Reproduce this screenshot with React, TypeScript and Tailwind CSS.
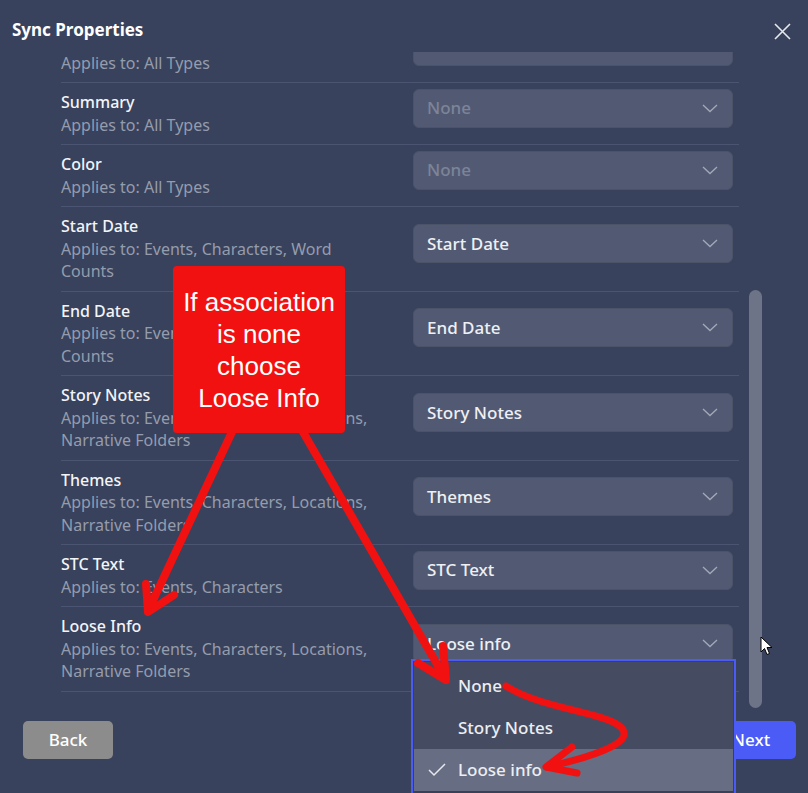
import React from "react";

type Row = { name: string; applies: string; value: string; disabled?: boolean };

const rows: Row[] = [
  { name: "Description", applies: "Applies to: All Types", value: "", disabled: true },
  { name: "Summary", applies: "Applies to: All Types", value: "None", disabled: true },
  { name: "Color", applies: "Applies to: All Types", value: "None", disabled: true },
  { name: "Start Date", applies: "Applies to: Events, Characters, Word Counts", value: "Start Date" },
  { name: "End Date", applies: "Applies to: Events, Characters, Word Counts", value: "End Date" },
  { name: "Story Notes", applies: "Applies to: Events, Characters, Locations, Narrative Folders", value: "Story Notes" },
  { name: "Themes", applies: "Applies to: Events, Characters, Locations, Narrative Folders", value: "Themes" },
  { name: "STC Text", applies: "Applies to: Events, Characters", value: "STC Text" },
  { name: "Loose Info", applies: "Applies to: Events, Characters, Locations, Narrative Folders", value: "Loose info" },
];

function Chevron() {
  return (
    <svg width="16" height="9" viewBox="0 0 16 9" className="shrink-0">
      <path d="M1 1 L8 7.5 L15 1" fill="none" stroke="#a3a9b8" strokeWidth="1.3" />
    </svg>
  );
}

function Select({ value, disabled }: { value: string; disabled?: boolean }) {
  return (
    <div className="-mt-[11px] w-[320px] h-[39px] shrink-0 rounded-[6px] bg-[#525a73] border border-[#4b5369] flex items-center justify-between pl-[13px] pr-[14px]">
      <span className={disabled ? "text-[17px] font-medium text-[#7d8498]" : "text-[17px] font-medium text-[#eef0f4]"}>{value}</span>
      <Chevron />
    </div>
  );
}

export default function App() {
  return (
    <div className="relative w-[808px] h-[793px] overflow-hidden bg-[#38425c] flex flex-col font-['Noto_Sans',sans-serif]">
      {/* header */}
      <div className="h-[52px] shrink-0 flex items-start justify-between pl-[12px] pr-[17px] pt-[17px]">
        <h1 className="text-[17px] leading-[26px] font-bold text-white">Sync Properties</h1>
        <svg width="17" height="17" viewBox="0 0 17 17" className="mt-[6px]">
          <path d="M1 1 L16 16 M16 1 L1 16" stroke="#e6e8ee" strokeWidth="1.6" />
        </svg>
      </div>

      {/* body */}
      <div className="h-[658px] shrink-0 flex pl-[61px]">
        <div className="w-[678px] overflow-hidden">
          <div className="-mt-[31px] flex flex-col">
            {rows.map((r) => (
              <div key={r.name} className="flex items-center border-b border-[#4b5470] pt-2 pb-2 pr-[6px]">
                <div className="w-[352px] shrink-0 pr-[32px] text-[16px] leading-[22.5px]">
                  <div className="font-medium text-[#f3f4f7]">{r.name}</div>
                  <div className="text-[#959cad]">{r.applies}</div>
                </div>
                <Select value={r.value} disabled={r.disabled} />
              </div>
            ))}
          </div>
        </div>
        <div className="ml-[10px] w-[13px] flex flex-col justify-end pb-[2px]">
          <div className="h-[418px] w-[13px] rounded-full bg-[#6e7488]" />
        </div>
      </div>

      {/* footer */}
      <div className="flex justify-between pl-[23px] pr-[12px] pt-[11px]">
        <button className="w-[90px] h-[38px] rounded-[5px] bg-[#8c8c8c] text-white text-[17px] font-medium">Back</button>
        <button className="w-[90px] h-[38px] rounded-[5px] bg-[#4a5cf5] text-white text-[17px] font-medium">Next</button>
      </div>

      {/* open dropdown */}
      <div className="absolute left-[411px] top-[659px] w-[325px] h-[140px] border-2 border-[#4a5cf5] bg-[#3a4156]">
        <div className="m-[1px] pt-[3px] bg-[#454c62] flex flex-col">
          <div className="h-[42px] flex items-center pl-[44px] text-[17px] font-medium text-[#eceef2]">None</div>
          <div className="h-[42px] flex items-center pl-[44px] text-[17px] font-medium text-[#eceef2]">Story Notes</div>
          <div className="h-[42px] flex items-center bg-[#676d82] pl-[14px] text-[17px] font-medium text-[#eceef2]">
            <svg width="18" height="14" viewBox="0 0 18 14" className="mr-[12px]">
              <path d="M1 7 L6 12 L17 1" fill="none" stroke="#e6e8ee" strokeWidth="1.5" />
            </svg>
            Loose info
          </div>
        </div>
      </div>

      {/* annotation box */}
      <div className="absolute left-[173px] top-[266px] w-[172px] h-[167px] rounded-[4px] bg-[#f21111] flex items-center justify-center text-center text-white text-[26px] leading-[32px] font-['Liberation_Sans',Arial,sans-serif]">
        <div>
          If association
          <br />
          is none
          <br />
          choose
          <br />
          Loose Info
        </div>
      </div>

      {/* arrows */}
      <svg className="absolute left-0 top-0 pointer-events-none" width="808" height="793" viewBox="0 0 808 793">
        <g fill="none" stroke="#f21111" strokeWidth="8" strokeLinecap="round" strokeLinejoin="round">
          <path d="M232 432 L148 611" />
          <path d="M146 584 L148 612 L174 595" />
          <path d="M303 432 L445 678" />
          <path d="M443 646 L446 680 L418 663" />
          <path d="M506 686 C 540 708 600 712 618 725 C 640 740 600 755 547 767" strokeWidth="7" />
          <path d="M572 747 L546 767 L577 773" strokeWidth="7" />
        </g>
      </svg>

      {/* mouse cursor */}
      <svg className="absolute left-[760px] top-[636px]" width="14" height="20" viewBox="0 0 14 20">
        <path d="M1 1 L1 16 L4.5 12.5 L7 18.5 L9.5 17.5 L7 11.5 L12 11.5 Z" fill="#ffffff" stroke="#000000" strokeWidth="1" strokeLinejoin="round" />
      </svg>
    </div>
  );
}
